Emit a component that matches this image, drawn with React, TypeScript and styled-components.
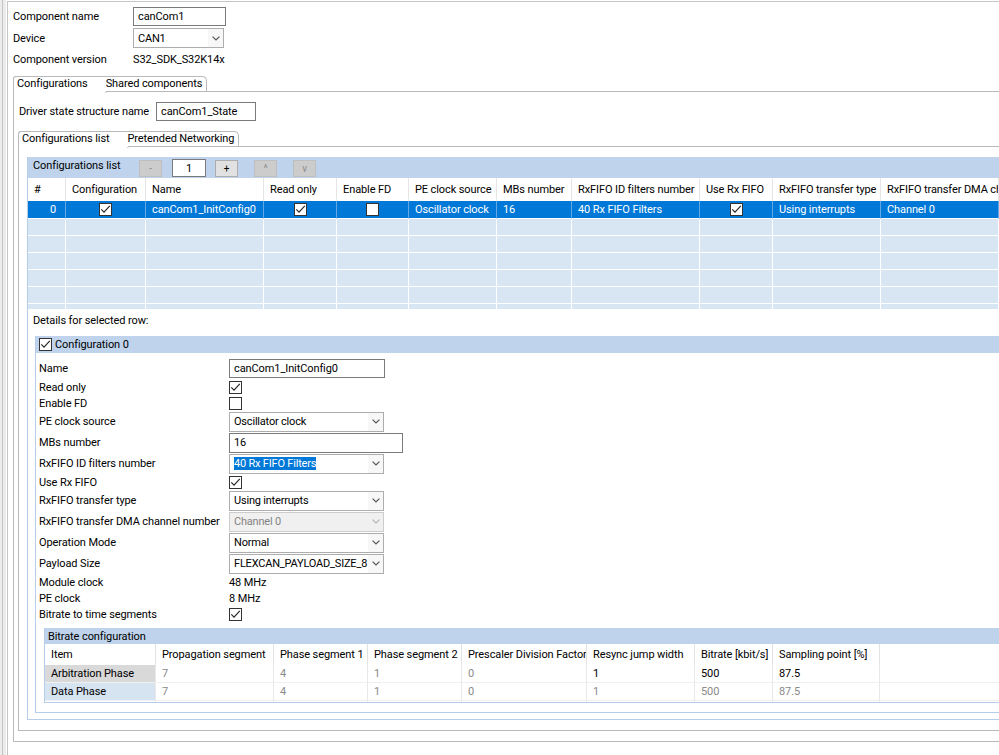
import React from "react";
import styled, { createGlobalStyle, css } from "styled-components";

// colours picked from the S32DS component inspector
const LINE = "#b9b9b9";
const GROUP_LINE = "#b5cdea";
const GROUP_BG = "#bfd4ec";
const SELECT_BLUE = "#0078d7";

const GlobalStyle = createGlobalStyle`
  *, *::before, *::after { box-sizing: border-box; }
  html, body { margin: 0; padding: 0; background: #fff; overflow: hidden; }
  body {
    font-family: Roboto, "Liberation Sans", Arial, sans-serif;
    font-size: 11px;
    letter-spacing: -0.1px;
    color: #000;
  }
`;

const Page = styled.div`
  display: flex;
  width: 999px;
  height: 755px;
  overflow: hidden;
  background: #fff;
`;

const Rail = styled.div`
  flex: none;
  width: 7px;
  background: linear-gradient(to right, #ececec 0 2px, #c4c4c4 2px 3px, #ececec 3px 6px, #fff 6px 7px);
`;

const Editor = styled.div`
  flex: 1;
  min-width: 0;
  margin-top: 1px;
  border-top: 1px solid #c6c6c6;
  border-left: 1px solid #c6c6c6;
  padding: 5px 0 0 5px;
`;

const HeaderForm = styled.div`
  display: grid;
  grid-template-columns: 120px auto;
  grid-template-rows: 19px 20px 18px;
  row-gap: 2px;
  align-items: center;
  justify-items: start;
`;

const Text = styled.span`
  white-space: nowrap;
`;

const TextField = styled.div<{ $w: number; $h?: number }>`
  width: ${(p) => p.$w}px;
  height: ${(p) => p.$h ?? 19}px;
  border: 1px solid #7a7a7a;
  background: #fff;
  padding-left: 4px;
  display: flex;
  align-items: center;
  white-space: nowrap;
`;

const SelectBox = styled.div<{ $w: number; $disabled?: boolean }>`
  width: ${(p) => p.$w}px;
  height: 20px;
  display: flex;
  align-items: center;
  padding-left: 4px;
  border: 1px solid ${(p) => (p.$disabled ? "#cccccc" : "#adadad")};
  background: ${(p) => (p.$disabled ? "#f0f0f0" : "#fff")};
  color: ${(p) => (p.$disabled ? "#838383" : "#000")};
`;

const SelectText = styled.span`
  flex: 1;
  min-width: 0;
  overflow: hidden;
  white-space: nowrap;
  letter-spacing: -0.2px;
`;

const Highlight = styled.span`
  background: ${SELECT_BLUE};
  color: #fff;
  padding: 1px 0;
`;

const ArrowCell = styled.span<{ $disabled?: boolean }>`
  flex: none;
  width: 15px;
  height: 100%;
  display: flex;
  align-items: center;
  justify-content: center;
  background: ${(p) => (p.$disabled ? "transparent" : "#f7f7f7")};
`;

const Chevron = ({ color }: { color: string }) => (
  <svg width="8" height="5" viewBox="0 0 8 5">
    <polyline points="0.6,0.6 4,4 7.4,0.6" fill="none" stroke={color} strokeWidth="1.2" />
  </svg>
);

const Select = ({ w, children, disabled }: { w: number; children: React.ReactNode; disabled?: boolean }) => (
  <SelectBox $w={w} $disabled={disabled}>
    <SelectText>{children}</SelectText>
    <ArrowCell $disabled={disabled}>
      <Chevron color={disabled ? "#b5b5b5" : "#555"} />
    </ArrowCell>
  </SelectBox>
);

const Box = styled.span`
  flex: none;
  display: inline-flex;
  align-items: center;
  justify-content: center;
  width: 13px;
  height: 13px;
  border: 1px solid #333;
  background: #fff;
`;

const Checkbox = ({ checked }: { checked?: boolean }) => (
  <Box>
    {checked && (
      <svg width="11" height="11" viewBox="0 0 11 11">
        <polyline points="1.3,5.4 4,8.2 9.8,1.8" fill="none" stroke="#222" strokeWidth="1.1" />
      </svg>
    )}
  </Box>
);

/* tabs */

const TabStrip = styled.div<{ $top: number }>`
  display: flex;
  height: 16px;
  margin-top: ${(p) => p.$top}px;
`;

const Tab = styled.div<{ $active?: boolean }>`
  position: relative;
  height: 16px;
  white-space: nowrap;
  border-top: 1px solid ${LINE};
  background: #fff;
  line-height: 14px;
  ${(p) =>
    p.$active
      ? css`
          border-left: 1px solid ${LINE};
          border-top-left-radius: 3px;
          padding: 0 8px 0 3px;
          &::after {
            content: "";
            position: absolute;
            top: -1px;
            right: 0;
            width: 1px;
            height: 17px;
            background: ${LINE};
            transform-origin: top;
            transform: skewX(32deg);
          }
        `
      : css`
          border-right: 1px solid ${LINE};
          border-top-right-radius: 5px;
          padding: 0 4px 0 10px;
          &::after {
            content: "";
            position: absolute;
            left: 10px;
            right: -1px;
            bottom: 0;
            height: 1px;
            background: ${LINE};
          }
        `}
`;

const TabFill = styled.div`
  flex: 1;
  border-bottom: 1px solid ${LINE};
`;

const Panel = styled.div<{ $pad: string }>`
  border-left: 1px solid ${LINE};
  border-bottom: 1px solid ${LINE};
  padding: ${(p) => p.$pad};
`;

const DriverRow = styled.div`
  display: flex;
  align-items: center;
  height: 19px;
`;

const DriverLabel = styled.span`
  width: 138px;
  padding-left: 1px;
  white-space: nowrap;
`;

/* blue titled groups */

const Group = styled.div<{ $margin: string; $padBottom: number }>`
  margin: ${(p) => p.$margin};
  border-left: 1px solid ${GROUP_LINE};
  border-bottom: 1px solid ${GROUP_LINE};
  padding-bottom: ${(p) => p.$padBottom}px;
`;

const GroupHeader = styled.div<{ $h: number }>`
  height: ${(p) => p.$h}px;
  background: ${GROUP_BG};
  display: flex;
  align-items: center;
  gap: 3px;
  padding-left: 3px;
  white-space: nowrap;
`;

const Toolbar = styled.div`
  height: 21px;
  background: ${GROUP_BG};
  display: flex;
  align-items: flex-end;
  padding-bottom: 1px;
`;

const ToolbarTitle = styled.span`
  align-self: flex-start;
  margin-top: 2px;
  width: 111px;
  padding-left: 5px;
  line-height: 14px;
  white-space: nowrap;
`;

const ToolButton = styled.div<{ $enabled?: boolean; $gap: number }>`
  width: 23px;
  height: 17px;
  margin-left: ${(p) => p.$gap}px;
  display: flex;
  align-items: center;
  justify-content: center;
  font-size: 10px;
  border: 1px solid ${(p) => (p.$enabled ? "#adadad" : "#bfbfbf")};
  background: ${(p) => (p.$enabled ? "#e1e1e1" : "#cccccc")};
  color: ${(p) => (p.$enabled ? "#000" : "#8d8d8d")};
`;

const CountField = styled.div`
  width: 34px;
  height: 18px;
  margin-left: 10px;
  border: 1px solid #7a7a7a;
  background: #fff;
  display: flex;
  align-items: center;
  justify-content: center;
`;

/* grids */

const TableClip = styled.div<{ $h: number }>`
  height: ${(p) => p.$h}px;
  overflow: hidden;
`;

const GridRow = styled.div<{ $cols: string }>`
  display: grid;
  grid-template-columns: ${(p) => p.$cols};
  width: max-content;
`;

const HeadCell = styled.div<{ $h: number; $line: string }>`
  height: ${(p) => p.$h}px;
  line-height: ${(p) => p.$h}px;
  padding-left: 6px;
  border-right: 1px solid ${(p) => p.$line};
  background: #fff;
  white-space: nowrap;
  overflow: hidden;
`;

const justify = { left: "flex-start", center: "center", right: "flex-end" } as const;
type Align = keyof typeof justify;

const SelCell = styled.div<{ $align?: Align }>`
  height: 18px;
  padding: 0 6px;
  display: flex;
  align-items: center;
  justify-content: ${(p) => justify[p.$align ?? "left"]};
  background: ${SELECT_BLUE};
  color: #fff;
  border-right: 1px solid #62a8e6;
  border-bottom: 1px solid #fff;
  white-space: nowrap;
  overflow: hidden;
`;

const EmptyCell = styled.div`
  height: 17px;
  background: #d8e5f3;
  border-right: 1px solid #fff;
  border-bottom: 1px solid #fff;
`;

const DetailsLabel = styled.div`
  padding: 5px 0 8px 5px;
  line-height: 14px;
`;

const Form = styled.div`
  padding: 5px 0 0 3px;
`;

const FormRow = styled.div<{ $h: number }>`
  display: flex;
  align-items: center;
  height: ${(p) => p.$h}px;
`;

const FormLabel = styled.span`
  flex: none;
  width: 190px;
  white-space: nowrap;
`;

const BrCell = styled.div<{ $tone?: "gray" | "black"; $bg?: string }>`
  height: 18px;
  line-height: 17px;
  padding-left: 6px;
  border-right: 1px solid #e8e8e8;
  border-bottom: 1px solid #f0f0f0;
  color: ${(p) => (p.$tone === "black" ? "#000" : "#8a8a8a")};
  background: ${(p) => p.$bg ?? "#fff"};
  white-space: nowrap;
  overflow: hidden;
`;

const cfgCols = "38px 80px 118px 73px 72px 88px 75px 128px 73px 108px 118px";
const cfgHeads = [
  "#",
  "Configuration",
  "Name",
  "Read only",
  "Enable FD",
  "PE clock source",
  "MBs number",
  "RxFIFO ID filters number",
  "Use Rx FIFO",
  "RxFIFO transfer type",
  "RxFIFO transfer DMA channel number",
];

const brCols = "111px 118px 94px 94px 125px 108px 78px 107px 300px";
const brHeads = [
  "Item",
  "Propagation segment",
  "Phase segment 1",
  "Phase segment 2",
  "Prescaler Division Factor",
  "Resync jump width",
  "Bitrate [kbit/s]",
  "Sampling point [%]",
  "",
];

type BrRow = { item: string; bg: string; values: string[]; dark: number[] };
const brRows: BrRow[] = [
  { item: "Arbitration Phase", bg: "#d9d9d9", values: ["7", "4", "1", "0", "1", "500", "87.5", ""], dark: [4, 5, 6] },
  { item: "Data Phase", bg: "#d6e4f2", values: ["7", "4", "1", "0", "1", "500", "87.5", ""], dark: [] },
];

const ConfigTable = () => (
  <TableClip $h={131}>
    <GridRow $cols={cfgCols}>
      {cfgHeads.map((h) => (
        <HeadCell key={h} $h={23} $line="#e5e5e5">
          {h}
        </HeadCell>
      ))}
    </GridRow>
    <GridRow $cols={cfgCols}>
      <SelCell $align="right" style={{ paddingRight: 9 }}>0</SelCell>
      <SelCell $align="center"><Checkbox checked /></SelCell>
      <SelCell>canCom1_InitConfig0</SelCell>
      <SelCell $align="center"><Checkbox checked /></SelCell>
      <SelCell $align="center"><Checkbox /></SelCell>
      <SelCell>Oscillator clock</SelCell>
      <SelCell>16</SelCell>
      <SelCell>40 Rx FIFO Filters</SelCell>
      <SelCell $align="center"><Checkbox checked /></SelCell>
      <SelCell>Using interrupts</SelCell>
      <SelCell>Channel 0</SelCell>
    </GridRow>
    {[0, 1, 2, 3, 4, 5].map((r) => (
      <GridRow key={r} $cols={cfgCols}>
        {cfgHeads.map((h) => (
          <EmptyCell key={h} />
        ))}
      </GridRow>
    ))}
  </TableClip>
);

const BitrateTable = () => (
  <TableClip $h={58}>
    <GridRow $cols={brCols}>
      {brHeads.map((h, i) => (
        <HeadCell key={i} $h={21} $line="#e3e3e3">
          {h}
        </HeadCell>
      ))}
    </GridRow>
    {brRows.map((row) => (
      <GridRow key={row.item} $cols={brCols}>
        <BrCell $tone="black" $bg={row.bg}>{row.item}</BrCell>
        {row.values.map((v, i) => (
          <BrCell key={i} $tone={row.dark.includes(i) ? "black" : "gray"}>
            {v}
          </BrCell>
        ))}
      </GridRow>
    ))}
    <GridRow $cols={brCols}>
      {brHeads.map((h, i) => (
        <BrCell key={i} />
      ))}
    </GridRow>
  </TableClip>
);

export default function App() {
  return (
    <>
      <GlobalStyle />
      <Page>
        <Rail />
        <Editor>
          <HeaderForm>
            <Text>Component name</Text>
            <TextField $w={93}>canCom1</TextField>
            <Text>Device</Text>
            <Select w={91}>CAN1</Select>
            <Text>Component version</Text>
            <Text>S32_SDK_S32K14x</Text>
          </HeaderForm>

          <TabStrip $top={8}>
            <Tab $active>Configurations</Tab>
            <Tab>Shared components</Tab>
            <TabFill />
          </TabStrip>
          <Panel $pad="10px 0 10px 4px">
            <DriverRow>
              <DriverLabel>Driver state structure name</DriverLabel>
              <TextField $w={100}>canCom1_State</TextField>
            </DriverRow>

            <TabStrip $top={10}>
              <Tab $active>Configurations list</Tab>
              <Tab>Pretended Networking</Tab>
              <TabFill />
            </TabStrip>
            <Panel $pad="10px 0 10px 8px">
              <Group $margin="0" $padBottom={6}>
                <Toolbar>
                  <ToolbarTitle>Configurations list</ToolbarTitle>
                  <ToolButton $gap={0}>-</ToolButton>
                  <CountField>1</CountField>
                  <ToolButton $enabled $gap={9}>+</ToolButton>
                  <ToolButton $gap={16}>^</ToolButton>
                  <ToolButton $gap={16}>v</ToolButton>
                </Toolbar>
                <ConfigTable />
                <DetailsLabel>Details for selected row:</DetailsLabel>

                <Group $margin="0 0 0 7px" $padBottom={9}>
                  <GroupHeader $h={17}>
                    <Checkbox checked />
                    <Text>Configuration 0</Text>
                  </GroupHeader>
                  <Form>
                    <FormRow $h={21}>
                      <FormLabel>Name</FormLabel>
                      <TextField $w={156} $h={19}>canCom1_InitConfig0</TextField>
                    </FormRow>
                    <FormRow $h={16}>
                      <FormLabel>Read only</FormLabel>
                      <Checkbox checked />
                    </FormRow>
                    <FormRow $h={16}>
                      <FormLabel>Enable FD</FormLabel>
                      <Checkbox />
                    </FormRow>
                    <FormRow $h={21}>
                      <FormLabel>PE clock source</FormLabel>
                      <Select w={155}>Oscillator clock</Select>
                    </FormRow>
                    <FormRow $h={21}>
                      <FormLabel>MBs number</FormLabel>
                      <TextField $w={174} $h={20}>16</TextField>
                    </FormRow>
                    <FormRow $h={21}>
                      <FormLabel>RxFIFO ID filters number</FormLabel>
                      <Select w={155}>
                        <Highlight>40 Rx FIFO Filters</Highlight>
                      </Select>
                    </FormRow>
                    <FormRow $h={16}>
                      <FormLabel>Use Rx FIFO</FormLabel>
                      <Checkbox checked />
                    </FormRow>
                    <FormRow $h={21}>
                      <FormLabel>RxFIFO transfer type</FormLabel>
                      <Select w={155}>Using interrupts</Select>
                    </FormRow>
                    <FormRow $h={21}>
                      <FormLabel>RxFIFO transfer DMA channel number</FormLabel>
                      <Select w={155} disabled>Channel 0</Select>
                    </FormRow>
                    <FormRow $h={21}>
                      <FormLabel>Operation Mode</FormLabel>
                      <Select w={155}>Normal</Select>
                    </FormRow>
                    <FormRow $h={21}>
                      <FormLabel>Payload Size</FormLabel>
                      <Select w={155}>FLEXCAN_PAYLOAD_SIZE_8</Select>
                    </FormRow>
                    <FormRow $h={16}>
                      <FormLabel>Module clock</FormLabel>
                      <Text>48 MHz</Text>
                    </FormRow>
                    <FormRow $h={16}>
                      <FormLabel>PE clock</FormLabel>
                      <Text>8 MHz</Text>
                    </FormRow>
                    <FormRow $h={16}>
                      <FormLabel>Bitrate to time segments</FormLabel>
                      <Checkbox checked />
                    </FormRow>
                  </Form>

                  <Group $margin="6px 0 0 8px" $padBottom={0}>
                    <GroupHeader $h={16}>
                      <Text>Bitrate configuration</Text>
                    </GroupHeader>
                    <BitrateTable />
                  </Group>
                </Group>
              </Group>
            </Panel>
          </Panel>
        </Editor>
      </Page>
    </>
  );
}
